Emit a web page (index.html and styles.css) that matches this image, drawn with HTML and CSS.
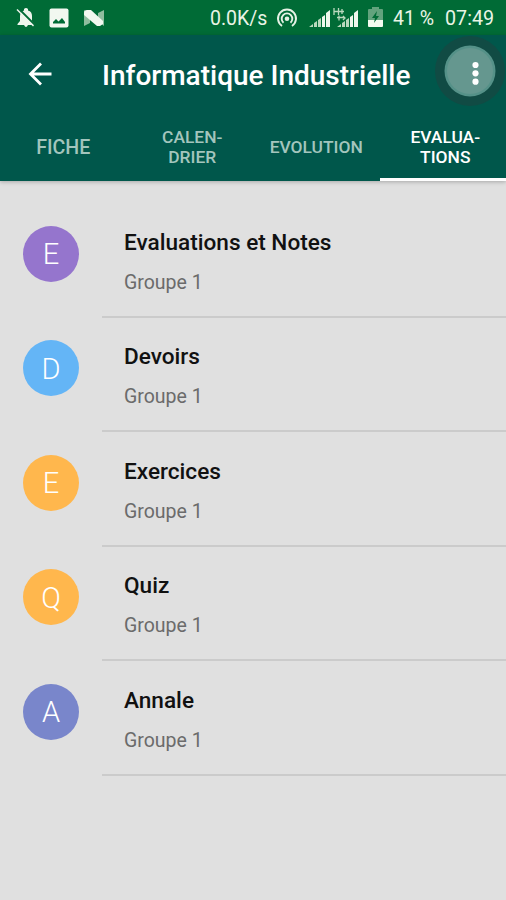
FILE: index.html
```html
<!DOCTYPE html>
<html lang="fr">
<head>
  <meta charset="UTF-8" />
  <meta name="viewport" content="width=device-width, initial-scale=1.0"/>
  <title>Informatique Industrielle</title>
  <link rel="stylesheet" href="styles.css">
</head>
<body>
  <div class="statut">
    <svg class="cloche" width="20" height="21" viewBox="0 0 20 21">
      <path d="M1.500 17l2.500-3V9c0-3 2-5 4-5.500V2q2-2 4 0v1.500c3 .5 4 3 4 5.500v5l2.500 3v1h-17zM8 18h4q-2 4-4 0z" fill="#eef5ec"/>
      <path d="M2 1l17 17" stroke="#006b36" stroke-width="2"/>
      <path d="M1 2.500l16.500 16.500" stroke="#eef5ec" stroke-width="1.500"/>
    </svg>
    <svg class="image" width="20" height="20" viewBox="0 0 20 20">
      <rect x=".5" y=".5" width="19" height="19" rx="2" fill="#f2f8f0"/>
      <path d="M4 15.500v-1.500l3-3 2.500 2.500L13 10l3 4v1.500z" fill="#006b36"/>
    </svg>
    <svg class="nougat" width="22" height="18" viewBox="0 0 22 18">
      <path d="M1 1l6 5v8l-6 3zM15 4l6-3v16l-6-5z" fill="#8fbd9f"/>
      <path d="M1 4q0-3 3-3h4l12 11v3l-3 2h-3L1 6z" fill="#f2f8f0"/>
    </svg>
    <span class="debit">0.0K/s</span>
    <svg class="hotspot" width="22" height="20" viewBox="0 0 22 20" fill="none" stroke="#e5f2e5" stroke-width="1.900">
      <path d="M6 18A9 9 0 1 1 16 18M7.500 14.700A5.300 5.300 0 1 1 14.500 14.700"/>
      <circle cx="11" cy="10.800" r="2.300" fill="#e5f2e5" stroke="none"/>
    </svg>
    <svg class="reseau" width="52" height="24" viewBox="0 0 52 24">
      <path d="M1 22l4-3v3zM6 18l3-2v6H6zM10 15l3-2v9h-3zM29 22l4-3v3zM34 18l3-2v6h-3zM38 15l3-2v9h-3z" fill="#b9d8bd"/>
      <path d="M14 12l3-2v12h-3zM18 8l4-3v17h-4zM42 12l3-2v12h-3zM46 8l4-3v17h-4z" fill="#f0f7ec"/>
      <path d="M26 3v7M30.500 3v7M26 6.500h10M34 4v5M29 12.500h7M31 10.500v5M35 11l2 2-2 2" fill="none" stroke="#b9d8bd" stroke-width="1.300"/>
    </svg>
    <svg class="batterie" width="15" height="21" viewBox="0 0 15 21">
      <path d="M0 3q0-1 1-1h3V0h7v2h3q1 0 1 1v10H0z" fill="#62a37d"/>
      <path d="M0 13h15v6q0 1-1 1H1q-1 0-1-1z" fill="#f5faef"/>
      <path d="M9 4l-5 7h3l-1 5 5-7H8z" fill="#006b36"/>
    </svg>
    <span class="pourcent">41 %</span>
    <span class="heure">07:49</span>
  </div>

  <header>
    <div class="barre">
      <svg class="retour" width="24" height="24" viewBox="0 0 24 24" fill="none" stroke="#fff" stroke-width="2.800">
        <path d="M23.500 12H3M13 1.500L2.500 12 13 22.500"/>
      </svg>
      <h1>Informatique Industrielle</h1>
      <svg class="menu" width="72" height="72" viewBox="0 0 72 72">
        <circle cx="36" cy="36" r="35" fill="#114b44"/>
        <circle cx="36" cy="36" r="25.500" fill="#559188"/>
        <circle cx="36" cy="36" r="23" fill="#65978f"/>
        <g fill="#fff">
          <circle cx="41.500" cy="30" r="3.100"/>
          <circle cx="41.500" cy="38.300" r="3.100"/>
          <circle cx="41.500" cy="46.700" r="3.100"/>
        </g>
      </svg>
    </div>
    <nav class="onglets">
      <div class="onglet fiche">FICHE</div>
      <div class="onglet double">CALEN-<br>DRIER</div>
      <div class="onglet">EVOLUTION</div>
      <div class="onglet double actif">EVALUA-<br>TIONS</div>
    </nav>
  </header>

  <main class="liste">
    <div class="element">
      <div class="avatar violet">E</div>
      <div class="texte">
        <h2>Evaluations et Notes</h2>
        <p>Groupe 1</p>
      </div>
    </div>
    <div class="element">
      <div class="avatar bleu">D</div>
      <div class="texte">
        <h2>Devoirs</h2>
        <p>Groupe 1</p>
      </div>
    </div>
    <div class="element">
      <div class="avatar orange">E</div>
      <div class="texte">
        <h2>Exercices</h2>
        <p>Groupe 1</p>
      </div>
    </div>
    <div class="element">
      <div class="avatar orange">Q</div>
      <div class="texte">
        <h2>Quiz</h2>
        <p>Groupe 1</p>
      </div>
    </div>
    <div class="element">
      <div class="avatar indigo">A</div>
      <div class="texte">
        <h2>Annale</h2>
        <p>Groupe 1</p>
      </div>
    </div>
  </main>
</body>
</html>
```
FILE: styles.css
```css
* {
  box-sizing: border-box;
}

body {
  margin: 0;
  min-height: 900px;
  font-family: Roboto, sans-serif;
  background-color: #e0e0e0;
  overflow: hidden;
}

svg {
  display: block;
  flex-shrink: 0;
}

h1, h2, p {
  margin: 0;
  white-space: nowrap;
}

/* barre de statut */
.statut {
  display: flex;
  align-items: center;
  height: 35px;
  padding-left: 16px;
  background-color: #006b36;
  color: #eaf5e6;
  font-size: 19px;
  white-space: nowrap;
}

.image {
  margin-left: 13px;
}

.nougat {
  margin-left: 14px;
}

.debit {
  width: 66px;
  margin-left: 105px;
  font-size: 19.5px;
}

.debit, .pourcent, .heure {
  padding-top: 1px;
}

.hotspot {
  margin-top: 1px;
}

.reseau {
  margin-left: 10px;
  margin-bottom: 1px;
}

.batterie {
  margin-left: 8px;
}

.pourcent {
  width: 52px;
  margin-left: 10px;
  font-size: 19.5px;
}

.heure {
  font-size: 19.7px;
}

/* en-tête */
header {
  height: 146px;
  background-color: #00574b;
  box-shadow: 0 1px 4px rgba(0, 0, 0, 0.25);
}

.barre {
  display: flex;
  align-items: center;
  height: 78px;
  padding-left: 28px;
}

.retour {
  margin-right: 50px;
}

h1 {
  width: 332px;
  padding-top: 3px;
  font-size: 28px;
  font-weight: 500;
  color: #fff;
}

.menu {
  margin-top: -6px;
}

.onglets {
  display: grid;
  grid-template-columns: repeat(4, 1fr);
  height: 68px;
}

.onglet {
  display: flex;
  align-items: center;
  justify-content: center;
  padding-top: 2px;
  border-bottom: 3px solid transparent;
  font-size: 17.4px;
  line-height: 20px;
  font-weight: 500;
  text-align: center;
  color: #a3c5bd;
}

.fiche {
  padding-top: 4px;
  font-size: 19.6px;
}

.double {
  padding-left: 5px;
}

.actif {
  color: #fff;
  border-bottom-color: #fff;
}

/* liste */
.liste {
  padding-top: 22px;
}

.element {
  display: flex;
  height: 114.6px;
  padding-left: 23px;
}

.avatar {
  display: flex;
  align-items: center;
  justify-content: center;
  width: 56px;
  height: 56px;
  margin-top: 22.5px;
  padding-top: 1px;
  border-radius: 50%;
  font-size: 29px;
  font-weight: 300;
  color: #fff;
}

.violet {
  background-color: #9575cd;
}

.bleu {
  background-color: #64b5f6;
}

.orange {
  background-color: #ffb74d;
}

.indigo {
  background-color: #7986cb;
}

.texte {
  flex: 1;
  margin-left: 23px;
  padding: 25.5px 0 0 22px;
  border-bottom: 2px solid #cbcbcb;
}

h2 {
  font-size: 22.6px;
  line-height: 28px;
  font-weight: 500;
  color: #111;
}

p {
  margin-top: 14px;
  font-size: 19.5px;
  line-height: 24px;
  color: #6b6b6b;
}
```
